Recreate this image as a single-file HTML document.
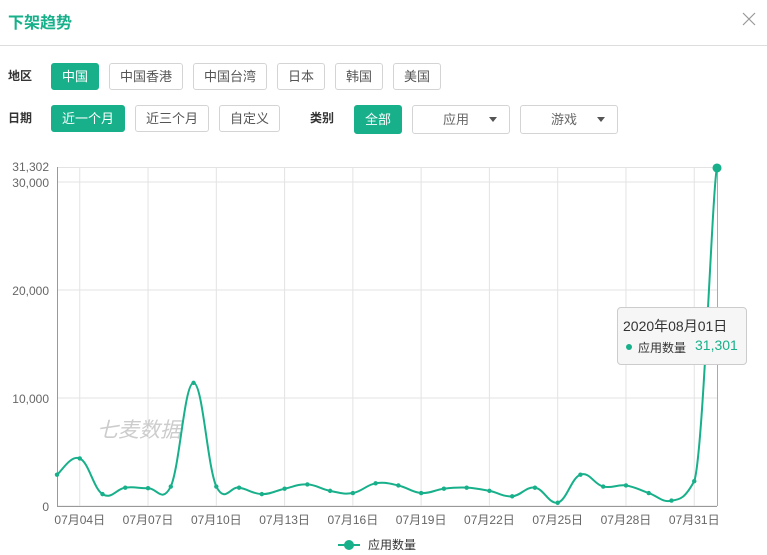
<!DOCTYPE html>
<html><head><meta charset="utf-8"><style>
*{margin:0;padding:0;box-sizing:border-box}
body{width:767px;height:555px;background:#fff;font-family:"Liberation Sans","Noto Sans CJK SC",sans-serif;position:relative;overflow:hidden;color:#333}
.t{position:absolute;left:8px;top:9px;font-size:16px;font-weight:bold;color:#17b08a}
.x{position:absolute;left:741px;top:10px;width:16px;height:16px}
.hr{position:absolute;left:0;top:45px;width:767px;height:1px;background:#ddd}
.lb{position:absolute;font-size:12px;font-weight:bold;color:#333}
.b{position:absolute;height:27px;border:1px solid #d4d4d4;border-radius:3px;font-size:13px;color:#555;text-align:center;line-height:25px;background:#fff}
.b.a{background:#17b08a;border-color:#17b08a;color:#fff}
.s{position:absolute;height:29px;border:1px solid #d4d4d4;border-radius:3px;font-size:13px;color:#666;line-height:27px;background:#fff}
.s i{position:absolute;right:12px;top:11px;border-left:4px solid transparent;border-right:4px solid transparent;border-top:5px solid #555}
svg{position:absolute;left:0;top:0}
.tip{position:absolute;left:617px;top:307px;width:130px;height:58px;background:#f6f6f6;border:1px solid #ccc;border-radius:4px}
</style></head><body>
<div class="t">下架趋势</div>
<svg class="x" viewBox="0 0 16 16" style="left:741px;top:11px"><path d="M2 2L14 14M14 2L2 14" stroke="#999" stroke-width="1.2"/></svg>
<div class="hr"></div>
<div class="lb" style="left:8px;top:67px">地区</div>
<div class="b a" style="left:51px;top:63px;width:48px">中国</div>
<div class="b" style="left:109px;top:63px;width:74px">中国香港</div>
<div class="b" style="left:193px;top:63px;width:74px">中国台湾</div>
<div class="b" style="left:277px;top:63px;width:48px">日本</div>
<div class="b" style="left:335px;top:63px;width:48px">韩国</div>
<div class="b" style="left:393px;top:63px;width:48px">美国</div>
<div class="lb" style="left:8px;top:109px">日期</div>
<div class="b a" style="left:51px;top:105px;width:74px">近一个月</div>
<div class="b" style="left:135px;top:105px;width:74px">近三个月</div>
<div class="b" style="left:219px;top:105px;width:61px">自定义</div>
<div class="lb" style="left:310px;top:109px">类别</div>
<div class="b a" style="left:354px;top:105px;width:48px;height:29px;line-height:27px">全部</div>
<div class="s" style="left:412px;top:105px;width:98px;padding-left:30px">应用<i></i></div>
<div class="s" style="left:520px;top:105px;width:98px;padding-left:30px">游戏<i></i></div>
<svg id="c" width="767" height="555" font-family="Liberation Sans,Noto Sans CJK SC,sans-serif"></svg>
<div class="tip">
<div style="position:absolute;left:5px;top:8px;font-size:14px;color:#333">2020年08月01日</div>
<div style="position:absolute;left:8px;top:36px;width:6px;height:6px;border-radius:3px;background:#17b08a"></div>
<div style="position:absolute;left:20px;top:31px;font-size:12px;color:#333">应用数量</div>
<div style="position:absolute;left:77px;top:29px;font-size:14px;color:#17b08a">31,301</div>
</div>
<script>
var v=[2900,4400,1100,1700,1650,1800,11400,1800,1700,1100,1600,2000,1400,1200,2100,1900,1200,1600,1700,1400,900,1700,300,2900,1800,1900,1200,500,2300,31301];
var X0=57,DX=(717-57)/29,Y0=506,K=108/10000;
var P=v.map(function(d,i){return[X0+i*DX,Y0-d*K]});
var s='';
[0,10000,20000,30000].forEach(function(d){var y=Y0-d*K;s+='<line x1="57" x2="717" y1="'+y+'" y2="'+y+'" stroke="#e3e3e3"/>';s+='<text x="49" y="'+(y+5)+'" font-size="12" fill="#666" text-anchor="end">'+(d?d.toLocaleString('en-US'):'0')+'</text>'});
s+='<line x1="57" x2="717" y1="167.5" y2="167.5" stroke="#e3e3e3"/><text x="49" y="171" font-size="12" fill="#666" text-anchor="end">31,302</text>';
var lab=['04','07','10','13','16','19','22','25','28','31'];
for(var j=0;j<10;j++){var x=X0+(1+3*j)*DX;s+='<line x1="'+x+'" x2="'+x+'" y1="167" y2="506" stroke="#e3e3e3"/>';s+='<text x="'+x+'" y="524" font-size="12" fill="#666" text-anchor="middle">07月'+lab[j]+'日</text>'}
s+='<line x1="717.5" x2="717.5" y1="167" y2="506" stroke="#aaa"/>';
s+='<line x1="57.5" x2="57.5" y1="167" y2="506" stroke="#999"/><line x1="57" x2="717" y1="506.5" y2="506.5" stroke="#999"/>';
s+='<text x="97" y="437" font-size="21" fill="#ccc" font-style="italic">七麦数据</text>';
function cl(y){return Math.min(y,504)}
var d='M'+P[0][0]+' '+P[0][1];
for(var i=0;i<P.length-1;i++){var p0=P[Math.max(i-1,0)],p1=P[i],p2=P[i+1],p3=P[Math.min(i+2,P.length-1)],t=0.2;
var t1=(i+2>=P.length-1)?0.08:t, t2=(i+1>=P.length-2)?0.05:t;
d+=' C'+(p1[0]+(p2[0]-p0[0])*t)+' '+cl(p1[1]+(p2[1]-p0[1])*t1)+' '+(p2[0]-(p3[0]-p1[0])*t)+' '+cl(p2[1]-(p3[1]-p1[1])*t2)+' '+p2[0]+' '+p2[1];}
s+='<path d="'+d+'" fill="none" stroke="#17b08a" stroke-width="2"/>';
P.forEach(function(p,i){s+='<circle cx="'+p[0]+'" cy="'+p[1]+'" r="'+(i==29?4.5:2.2)+'" fill="#17b08a"/>'});
s+='<line x1="338" x2="360" y1="545" y2="545" stroke="#17b08a" stroke-width="2"/><circle cx="349" cy="545" r="5" fill="#17b08a"/><text x="368" y="549" font-size="12" fill="#333">应用数量</text>';
document.getElementById('c').innerHTML=s;
</script>
</body></html>
